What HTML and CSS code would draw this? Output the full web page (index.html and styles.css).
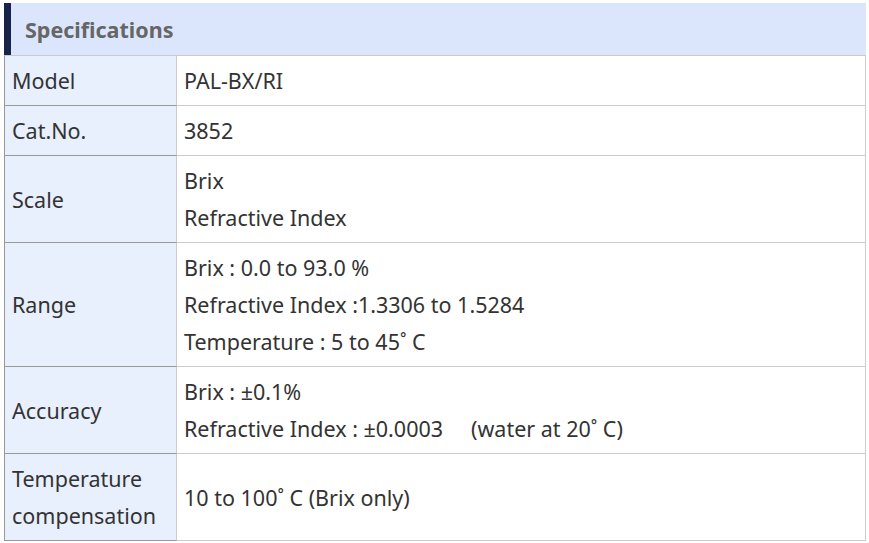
FILE: index.html
```html
<!DOCTYPE html>
<html lang="en">
<head>
<meta charset="utf-8">
<title>Specifications</title>
<link rel="stylesheet" href="styles.css">
</head>
<body>
<section class="spec">
  <h2 class="spec-title">Specifications</h2>
  <table class="spec-table">
    <tr><th>Model</th><td>PAL-BX/RI</td></tr>
    <tr><th>Cat.No.</th><td>3852</td></tr>
    <tr><th>Scale</th><td>Brix<br>Refractive Index</td></tr>
    <tr><th>Range</th><td>Brix : 0.0 to 93.0 %<br>Refractive Index :1.3306 to 1.5284<br>Temperature : 5 to 45˚ C</td></tr>
    <tr><th>Accuracy</th><td>Brix : ±0.1%<br>Refractive Index : ±0.0003&nbsp;&nbsp;&nbsp;&nbsp; (water at 20˚ C)</td></tr>
    <tr><th>Temperature compensation</th><td>10 to 100˚ C (Brix only)</td></tr>
  </table>
</section>
</body>
</html>
```
FILE: styles.css
```css
html, body {
  margin: 0;
  padding: 0;
  background: #ffffff;
}
body {
  font-family: "Noto Sans", "Open Sans", sans-serif;
  color: #333333;
}
.spec {
  width: 862px;
  margin: 3px 0 0 4px;
}
.spec-title {
  margin: 0;
  height: 52px;
  box-sizing: border-box;
  padding: 0 0 0 14px;
  display: flex;
  align-items: center;
  background: #dbe6fd;
  border-left: 7px solid #16244a;
  color: #666666;
  font-size: 21.5px;
  font-weight: 700;
}
.spec-table {
  width: 100%;
  border-collapse: separate;
  border-spacing: 0;
  font-size: 21.5px;
  line-height: 37px;
}
.spec-table th,
.spec-table td {
  padding: 6px 7px 6px 7px;
  vertical-align: middle;
  text-align: left;
  font-weight: 400;
}
.spec-table th {
  width: 157px;
  background: #e8effd;
  border-left: 1px solid #999999;
  border-bottom: 1px solid #999999;
  border-right: 1px solid #cccccc;
}
.spec-table td {
  background: #ffffff;
  border-bottom: 1px solid #cccccc;
  border-right: 1px solid #cccccc;
}
.spec-table tr:first-child th,
.spec-table tr:first-child td {
  border-top: 1px solid #cccccc;
}
```
